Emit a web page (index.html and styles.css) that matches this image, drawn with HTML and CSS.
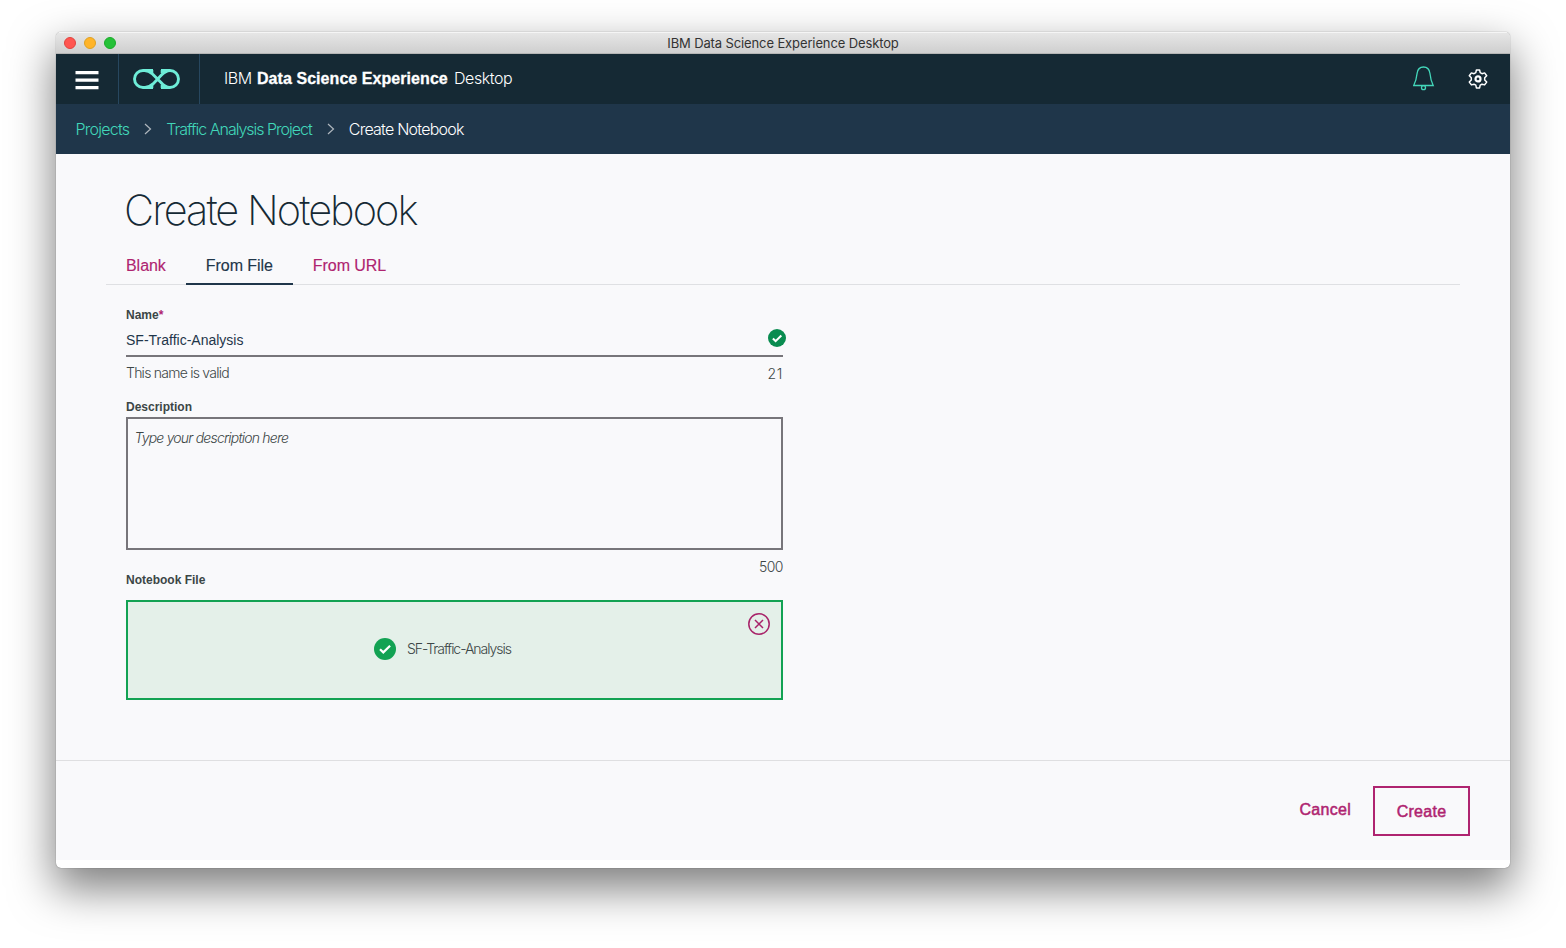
FILE: index.html
```html
<!DOCTYPE html>
<html lang="en">
<head>
<meta charset="utf-8">
<title>IBM Data Science Experience Desktop</title>
<link rel="stylesheet" href="styles.css">
</head>
<body>
<div class="window">
  <div class="titlebar">
    <div class="lights"><i class="light close"></i><i class="light minimize"></i><i class="light maximize"></i></div>
    <span class="window-title">IBM Data Science Experience Desktop</span>
  </div>
  <header class="header">
    <div class="menu"><svg width="24" height="20" viewBox="0 0 24 20"><path d="M.5 2.600h23M.5 10.100h23M.5 17.600h23" stroke="#fff" stroke-width="3.200"/></svg></div>
    <div class="logo"><svg width="48" height="22" viewBox="0 0 48 22" fill="none" stroke="#6eedd8" stroke-width="2.900"><path d="M20 2.500H10a8.500 8.500 0 0 0 0 17h2c3.500 0 5.500-1.300 8-3.600L28 7.500c3-3.200 5-5 9-5a8.500 8.500 0 0 1 0 17h-9M11.500 2.500c3.500 0 5.500 1.300 8 3.500l8.500 8.500c2.500 3 5 5 9 5M10 19.500h10M28 2.500h9"/><path d="M19.300 2v3M19.300 20v-3M28.700 2v3M28.700 20v-3" stroke-width="2"/></svg></div>
    <div class="brand"><span class="b1">IBM</span><strong class="b2">Data Science Experience</strong><span class="b3">Desktop</span></div>
    <div class="actions">
      <svg width="22" height="26" viewBox="0 0 22 26" fill="none" stroke="#43d6b9" stroke-width="1.300"><path d="M.7 19.500h19.500C18 15 17.400 12 16.900 7.300 16.400 3.300 13.700 1 10.500 1S4.600 3.300 4.100 7.300C3.600 12 2.900 15 .7 19.500z"/><circle cx="10.500" cy="21.700" r="2"/></svg>
      <svg width="20" height="20" viewBox="0 0 20 20" fill="none" stroke="#fff" stroke-width="1.500" stroke-linejoin="round"><path d="M8.400 1h3.200l.6 2.700 1.800 1L16.600 3.900l2.100 2.900-2 1.900v2.300l2 2-2.100 2.900-2.600-.7-1.800 1-.6 2.700H8.400l-.6-2.700-1.800-1-2.600.7L1.300 13l2-2V8.700l-2-1.900 2.100-2.900 2.600.8 1.800-1z"/><circle cx="10" cy="9.900" r="2.500" stroke-width="2.200"/></svg>
    </div>
  </header>
  <nav class="crumbs">
    <a class="c1">Projects</a>
    <svg class="chev" width="8" height="12" viewBox="0 0 8 12"><path d="M1 1l5.500 5L1 11" fill="none" stroke="#aeb6bd" stroke-width="1.200"/></svg>
    <a class="c2">Traffic Analysis Project</a>
    <svg class="chev" width="8" height="12" viewBox="0 0 8 12"><path d="M1 1l5.500 5L1 11" fill="none" stroke="#aeb6bd" stroke-width="1.200"/></svg>
    <span class="c3">Create Notebook</span>
  </nav>
  <main class="main">
    <h1>Create Notebook</h1>
    <div class="tabs">
      <a class="tab tab-blank">Blank</a>
      <a class="tab tab-file">From File</a>
      <a class="tab tab-url">From URL</a>
    </div>
    <form class="form">
      <div class="label label-name">Name<span class="req">*</span></div>
      <div class="name-field"><span class="name-value">SF-Traffic-Analysis</span>
        <svg class="valid" width="18" height="18" viewBox="0 0 22 22"><circle cx="11" cy="11" r="11" fill="#098c50"/><path d="M6 11.600l3.300 3.200 7-6.800" fill="none" stroke="#fff" stroke-width="2.500"/></svg>
      </div>
      <div class="hint"><span class="hint-text">This name is valid</span><span class="count">21</span></div>
      <div class="label label-desc">Description</div>
      <div class="textarea"><span class="placeholder">Type your description here</span></div>
      <div class="limit">500</div>
      <div class="label label-file">Notebook File</div>
      <div class="dropzone">
        <svg class="ok" width="22" height="22" viewBox="0 0 22 22"><circle cx="11" cy="11" r="11" fill="#12a253"/><path d="M6 11.200l3.300 3.200 6.800-6.700" fill="none" stroke="#fff" stroke-width="2.200"/></svg>
        <span class="filename">SF-Traffic-Analysis</span>
        <svg class="remove" width="22" height="22" viewBox="0 0 22 22" fill="none" stroke="#a82369" stroke-width="1.500"><circle cx="11" cy="11" r="10.200"/><path d="M7 7l8 8M15 7l-8 8"/></svg>
      </div>
    </form>
  </main>
  <footer class="footer"><a class="cancel">Cancel</a><a class="create">Create</a></footer>
</div>
</body>
</html>
```
FILE: styles.css
```css
* { box-sizing: border-box; }
body { margin: 0; height: 948px; overflow: hidden; background: #fff; padding: 32px 56px 0; font-family: "Liberation Sans", Arial, sans-serif; }
svg { display: block; flex: none; }
span, a, strong { white-space: nowrap; }
.window { width: 1454px; height: 836px; border-radius: 5px; overflow: hidden; background: #fff; display: flex; flex-direction: column; box-shadow: 0 0 1px rgba(0,0,0,.6), 0 19px 44px 2px rgba(0,0,0,.5); }
.titlebar { height: 22px; flex: none; display: flex; align-items: center; position: relative; justify-content: center; background: linear-gradient(#e6e6e6, #cfcfcf); border-top: 1px solid #f5f5f5; border-bottom: 1px solid #b5b5b5; }
.lights { position: absolute; left: 8px; top: 4px; display: flex; gap: 8px; }
.light { width: 12px; height: 12px; border-radius: 50%; border: 1px solid; }
.close { background: #ff5550; border-color: #e0443e; }
.minimize { background: #ffb429; border-color: #dea123; }
.maximize { background: #25c138; border-color: #1aab29; }
.window-title { font: 13px/22px Inter, sans-serif; color: #333; letter-spacing: -.12px; }
.header { height: 50px; flex: none; display: flex; align-items: center; background: #152934; color: #fff; }
.menu { width: 63px; height: 50px; padding: 16px 0 0 19px; border-right: 1px solid #27475f; }
.logo { width: 81px; height: 50px; padding: 14px 0 0 14px; border-right: 1px solid #27475f; }
.brand { display: flex; padding-left: 24px; font-size: 16px; line-height: 52px; flex: 1; }
.b1, .b3 { font-family: Inter, sans-serif; font-weight: 300; }
.b1 { width: 33px; letter-spacing: -.4px; }
.b2 { width: 197px; line-height: 54px; letter-spacing: .06px; -webkit-text-stroke: .3px #fff; }
.b3 { letter-spacing: -.45px; }
.actions { display: flex; align-items: center; gap: 33px; padding-right: 22px; }
.crumbs { height: 50px; flex: none; background: #1f364a; padding-left: 19.5px; display: flex; align-items: center; font: 300 16px/50px Inter, sans-serif; color: #fff; }
.crumbs a { color: #41d6b9; }
.c1 { letter-spacing: -.76px; }
.c2 { letter-spacing: -1.01px; }
.c3 { letter-spacing: -.76px; }
.chev { margin: 0 14px 0 15px; }
.main { height: 606px; flex: none; background: #f9f9fb; padding: 31px 50px 0; }
h1 { margin: 0 0 1px; padding-left: 18px; height: 50px; font: 200 41.5px/50px Inter, sans-serif; color: #152934; letter-spacing: -1.95px; }
.tabs { display: flex; height: 49px; border-bottom: 1px solid #dfe0e3; }
.tab { height: 49px; line-height: 60px; font-size: 16px; color: #af2470; padding: 0 20px; letter-spacing: -.05px; -webkit-text-stroke: .15px; }
.tab-file { color: #1f364a; border-bottom: 2px solid #1f364a; width: 107px; }
.form { width: 677px; padding: 22px 0 0 20px; color: #3c4646; }
.label { font-size: 12px; font-weight: bold; line-height: 16px; height: 16px; }
.req { color: #af2470; }
.name-field { height: 34px; border-bottom: 2px solid #77757a; display: flex; justify-content: space-between; color: #1f364a; font-size: 14px; line-height: 34px; }
.valid { margin: 6px -3px 0 0; }
.hint { display: flex; justify-content: space-between; height: 42px; font: 300 14px/33px Inter, sans-serif; }
.hint-text { letter-spacing: -.76px; line-height: 32px; }
.count { letter-spacing: .7px; }
.label-desc { height: 18px; }
.textarea { height: 133px; border: 2px solid #77757a; padding: 0 6.5px; font: italic 300 14px/38px Inter, sans-serif; letter-spacing: -.8px; }
.limit { height: 22px; text-align: right; font: 300 14px/34px Inter, sans-serif; letter-spacing: -.5px; }
.label-file { height: 28px; }
.dropzone { position: relative; height: 100px; border: 2px solid #12a253; background: #e4f0e9; display: flex; align-items: center; padding: 0 0 2px 246px; gap: 11px; font: 300 14px/20px Inter, sans-serif; }
.filename { letter-spacing: -1.04px; }
.remove { position: absolute; right: 11px; top: 11px; }
.footer { height: 100px; flex: none; background: #f9f9fb; border-top: 1px solid #dfdfe1; display: flex; justify-content: flex-end; padding: 25px 40px 0 0; gap: 22px; color: #af2470; font-size: 16px; letter-spacing: .28px; -webkit-text-stroke: .5px #af2470; }
.cancel { line-height: 48px; }
.create { width: 97px; height: 50px; border: 2px solid #af2470; line-height: 47px; text-align: center; }
```
